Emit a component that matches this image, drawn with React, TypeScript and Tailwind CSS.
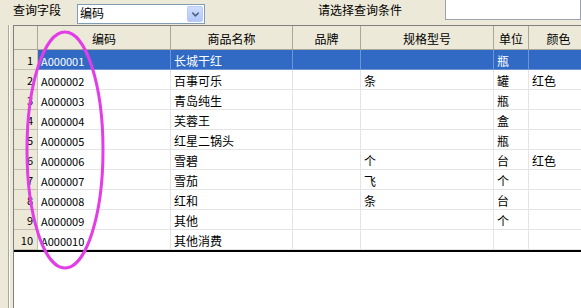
import { ChevronDown } from 'lucide-react'

const headers = ['编码', '商品名称', '品牌', '规格型号', '单位', '颜色']

const rows = [
  ['A000001', '长城干红', '', '', '瓶', ''],
  ['A000002', '百事可乐', '', '条', '罐', '红色'],
  ['A000003', '青岛纯生', '', '', '瓶', ''],
  ['A000004', '芙蓉王', '', '', '盒', ''],
  ['A000005', '红星二锅头', '', '', '瓶', ''],
  ['A000006', '雪碧', '', '个', '台', '红色'],
  ['A000007', '雪茄', '', '飞', '个', ''],
  ['A000008', '红和', '', '条', '台', ''],
  ['A000009', '其他', '', '', '个', ''],
  ['A000010', '其他消费', '', '', '', ''],
]

function TopBar() {
  return (
    <div className="flex items-start h-[25px] shrink-0">
      <span className="ml-[13px] mt-[3px] leading-[14px]">查询字段</span>
      <div className="ml-[16px] mt-[4px] w-[128px] h-[20px] border border-[#7f9db9] bg-white flex items-center">
        <span className="pl-[2px] leading-[14px] mt-[-3px]">编码</span>
        <div className="ml-auto mr-[1px] w-[16px] h-[16px] rounded-[2px] bg-gradient-to-b from-[#cfdcfd] to-[#b2c8fa] border border-[#b9cbf5] flex items-center justify-center">
          <ChevronDown size={11} strokeWidth={3.2} color="#4d6185" />
        </div>
      </div>
      <span className="ml-[113px] mt-[3px] leading-[14px]">请选择查询条件</span>
      <div className="ml-auto mt-[-1px] w-[136px] h-[21px] border border-[#9aa3ad] bg-white" />
    </div>
  )
}

function Grid() {
  return (
    <div className="flex-1 flex flex-col bg-white border-l border-t border-[#808080] overflow-hidden">
      <div className="grid grid-cols-[24px_133px_122px_68px_133px_35px_60px] w-max">
        <div className="h-[24px] bg-[#ece9d8] border-r border-b border-[#aca899]" />
        {headers.map((h) => (
          <div key={h} className="h-[24px] bg-[#ece9d8] border-r border-b border-[#aca899] text-center leading-[24px] pt-[1px] whitespace-nowrap">
            {h}
          </div>
        ))}
        {rows.map((r, i) => {
          const sel = i === 0
          return [
            <div key={'n' + i} className="h-[20px] bg-[#ece9d8] border-r border-b border-[#c4c0b2] text-right pr-[4px] text-[11px] leading-[21px]">
              {i + 1}
            </div>,
            ...r.map((c, j) => (
              <div
                key={i + '-' + j}
                className={
                  sel
                    ? 'h-[20px] bg-[#316ac5] text-white border-r border-b border-[#7194d4] pl-[3px] leading-[21px] whitespace-nowrap overflow-hidden'
                    : 'h-[20px] border-r border-b border-[#e4e4e4] pl-[3px] leading-[21px] whitespace-nowrap overflow-hidden'
                }
              >
                {j === 0 ? <span className="text-[11px]">{c}</span> : c}
              </div>
            )),
          ]
        })}
      </div>
      <div className="h-[2px] bg-black shrink-0" />
    </div>
  )
}

export default function App() {
  return (
    <div className="relative w-[581px] h-[308px] overflow-hidden bg-[#ece9d8] flex flex-col text-[12px] text-black font-['Noto_Sans_CJK_SC','Noto_Sans',sans-serif]">
      <TopBar />
      <div className="flex-1 flex pl-[8px] min-h-0">
        <div className="border-l border-[#aca899] flex">
          <div className="border-l border-white w-[4px]" />
        </div>
        <Grid />
      </div>
      {/* hand-drawn highlight round the code column */}
      <svg className="absolute left-0 top-0 pointer-events-none" width="581" height="308">
        <ellipse cx="65" cy="150" rx="38" ry="118" fill="none" stroke="#e23de6" strokeWidth="3" />
      </svg>
    </div>
  )
}
